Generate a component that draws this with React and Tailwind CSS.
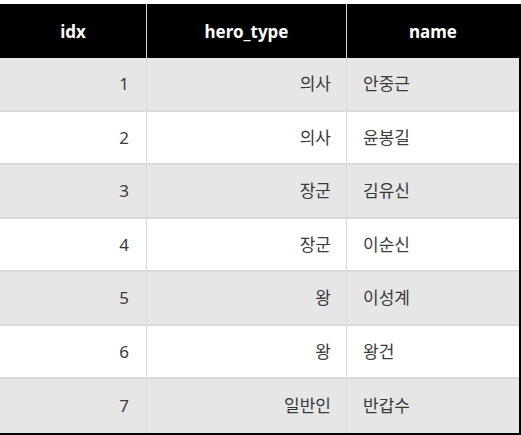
export default function App() {
  const rows = [
    [1, "의사", "안중근"],
    [2, "의사", "윤봉길"],
    [3, "장군", "김유신"],
    [4, "장군", "이순신"],
    [5, "왕", "이성계"],
    [6, "왕", "왕건"],
    [7, "일반인", "반갑수"],
  ];
  const heights = ["h-[54px]", "h-[53px]", "h-[54px]", "h-[53px]", "h-[54px]", "h-[53px]", "h-[54px]"];
  return (
    <div
      className="w-[521px] h-[435px] bg-white pt-[4px] text-[17px]"
      style={{ fontFamily: '"Noto Sans", "Noto Sans CJK KR", sans-serif' }}
    >
      <div className="w-[521px] border-r-2 border-b-2 border-black">
        <div className="flex h-[54px] bg-black text-white font-bold items-center">
          <div className="w-[147px] h-full flex items-center justify-center pt-[2px] border-r border-[#cfcfcf]">idx</div>
          <div className="w-[200px] h-full flex items-center justify-center pt-[2px] border-r border-[#cfcfcf]">hero_type</div>
          <div className="flex-1 h-full flex items-center justify-center pt-[2px]">name</div>
        </div>
        {rows.map((r, i) => (
          <div
            key={i}
            className={`flex ${heights[i]} text-[#3a3a3a] ${i % 2 === 0 ? "bg-[#e6e6e6]" : "bg-white"} ${i < rows.length - 1 ? "border-b-2 border-[#dadada]" : ""}`}
          >
            <div className="w-[147px] flex items-center justify-end pr-[17px] border-r border-[#d9d9d9]">{r[0]}</div>
            <div className="w-[200px] flex items-center justify-end pr-[15px] border-r border-[#d9d9d9]">{r[1]}</div>
            <div className="flex-1 flex items-center pl-[16px]">{r[2]}</div>
          </div>
        ))}
      </div>
    </div>
  );
}
